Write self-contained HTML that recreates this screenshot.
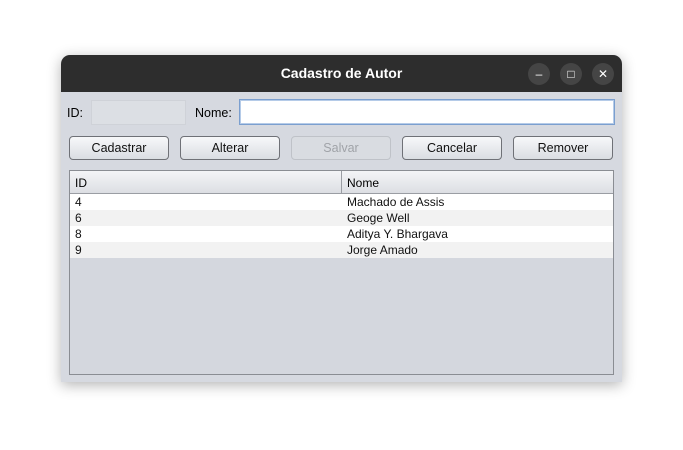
<!DOCTYPE html><html><head><style>
body{margin:0;width:683px;height:450px;background:#fff;font-family:"Liberation Sans","DejaVu Sans",sans-serif;font-size:12px;position:relative;overflow:hidden}
.win{position:absolute;left:61px;top:55px;width:561px;height:327px;background:#d6d9e0;border-radius:9px 9px 0 0;box-shadow:0 3px 14px rgba(0,0,0,.3);overflow:hidden}
.tb{position:absolute;left:0;top:0;width:561px;height:37px;background:#2d2d2d;color:#fff;font-weight:bold;font-size:14px;text-align:center;line-height:37px}
.cb{position:absolute;top:8px;width:22px;height:22px;border-radius:50%;background:#454545;color:#fff;font-size:12px;line-height:22px;text-align:center;font-weight:normal}
.a{position:absolute}
.btn{position:absolute;top:81px;width:100px;height:24px;box-sizing:border-box;border:1px solid #6f7177;border-radius:4px;background:linear-gradient(#f7f8fa,#dadde2);text-align:center;line-height:22px;color:#111;font-size:12.5px}
.row{position:absolute;left:0;width:543px;height:16px;line-height:16px;font-size:12px;color:#111}
.row span{position:absolute}
</style></head><body>
<div class="win">
<div class="tb">Cadastro de Autor
<div class="cb" style="left:467px">–</div>
<div class="cb" style="left:499px">□</div>
<div class="cb" style="left:531px">✕</div>
</div>
<div class="a" style="left:6px;top:51px;font-size:12.5px">ID:</div>
<div class="a" style="left:30px;top:45px;width:95px;height:25px;background:#dcdfe4;border:1px solid #cfd2d8;box-sizing:border-box"></div>
<div class="a" style="left:134px;top:51px;font-size:12.5px">Nome:</div>
<div class="a" style="left:178px;top:44px;width:376px;height:26px;background:#fff;border:1px solid #7b9fcf;box-sizing:border-box;box-shadow:inset 0 0 0 1px #b5cbe8"></div>
<div class="btn" style="left:8px">Cadastrar</div>
<div class="btn" style="left:119px">Alterar</div>
<div class="btn" style="left:230px;color:#a0a3a8;border-color:#bfc2c8;background:#d9dce1">Salvar</div>
<div class="btn" style="left:341px">Cancelar</div>
<div class="btn" style="left:452px">Remover</div>
<div class="a" style="left:8px;top:115px;width:545px;height:205px;box-sizing:border-box;border:1px solid #8a8d93;background:#d4d7de">
<div class="a" style="left:0;top:0;width:543px;height:23px;background:linear-gradient(#f4f5f7,#dcdee3);border-bottom:1px solid #9a9da3;box-sizing:border-box"></div>
<div class="a" style="left:271px;top:0;width:1px;height:23px;background:#9a9da3"></div>
<div class="a" style="left:5px;top:5px">ID</div>
<div class="a" style="left:277px;top:5px">Nome</div>
<div class="row" style="top:23px;background:#fff"><span style="left:5px">4</span><span style="left:277px">Machado de Assis</span></div>
<div class="row" style="top:39px;background:#f2f2f2"><span style="left:5px">6</span><span style="left:277px">Geoge Well</span></div>
<div class="row" style="top:55px;background:#fff"><span style="left:5px">8</span><span style="left:277px">Aditya Y. Bhargava</span></div>
<div class="row" style="top:71px;background:#f2f2f2"><span style="left:5px">9</span><span style="left:277px">Jorge Amado</span></div>
</div>
</div>
</body></html>
